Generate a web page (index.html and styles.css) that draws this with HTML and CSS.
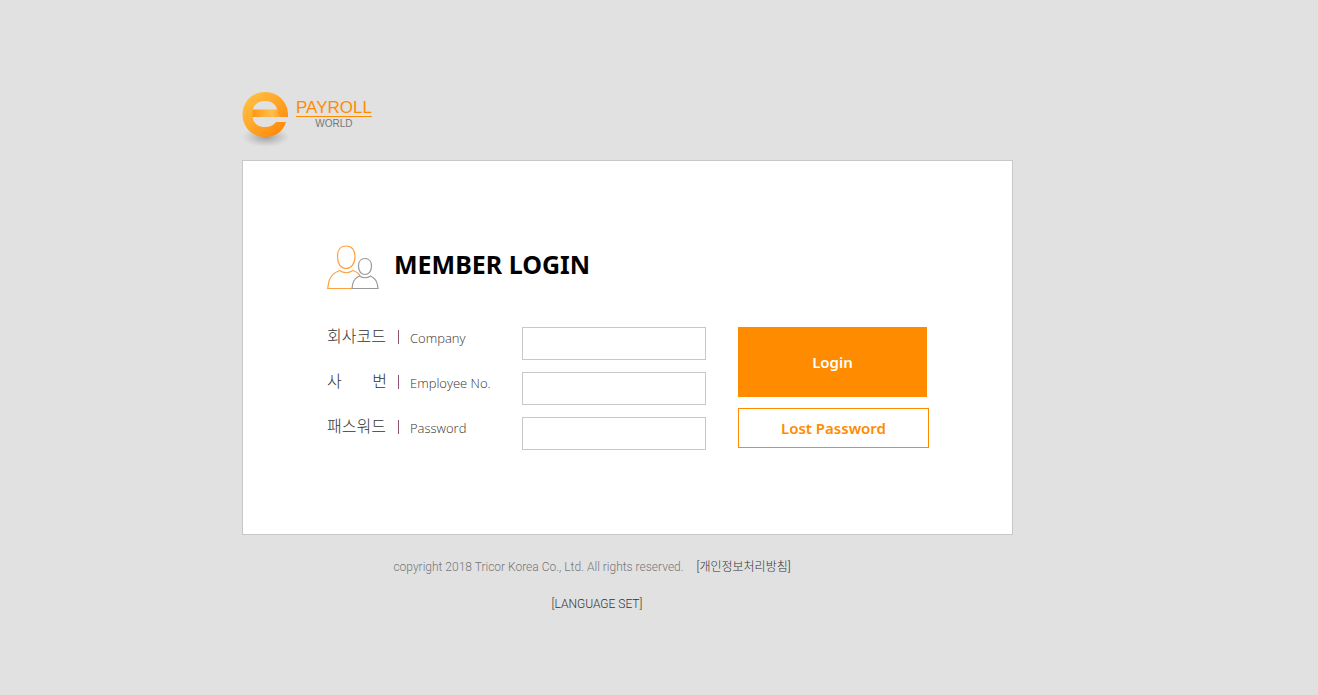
FILE: index.html
```html
<!DOCTYPE html>
<html lang="ko">

<head>
    <meta charset="UTF-8">
    <meta name="viewport" content="width=device-width, initial-scale=1.0">
    <title>e-Payroll World</title>
    <link rel="stylesheet" href="styles.css">
</head>

<body>

<div class="wrap">

    <header class="logo">
        <svg class="logo_mark" width="50" height="56" viewBox="0 0 50 56" aria-hidden="true">
            <defs>
                <linearGradient id="orange" x1="0" y1="0" x2="1" y2="1">
                    <stop offset="0" stop-color="#ffc64a"/>
                    <stop offset="0.45" stop-color="#ffa92c"/>
                    <stop offset="1" stop-color="#ff8000"/>
                </linearGradient>
                <linearGradient id="bar" x1="0" y1="0" x2="1" y2="0">
                    <stop offset="0" stop-color="#ff9612"/>
                    <stop offset="0.7" stop-color="#ffc04a"/>
                    <stop offset="1" stop-color="#ffa028"/>
                </linearGradient>
                <radialGradient id="shadow">
                    <stop offset="0" stop-color="#777" stop-opacity="0.65"/>
                    <stop offset="1" stop-color="#999" stop-opacity="0"/>
                </radialGradient>
            </defs>
            <ellipse cx="24" cy="46" rx="24" ry="10" fill="url(#shadow)"/>
            <path fill="url(#orange)" fill-rule="evenodd" d="M23 1C10 1 0.500 11 0.500 23.500S10 46 23 46C33 46 41 41 44 31H34C31.500 34.500 28 36 23 36C17 36 11.500 33 10.500 26H46V23.500C46 11 36 1 23 1ZM10.500 19C12 13 17 10 23 10S34 13 35.500 19Z"/>
            <path fill="url(#bar)" d="M10.500 18.500H35.500L38 26H10.500Z"/>
        </svg>
        <div class="logo_text">
            <span class="logo_payroll">PAYROLL</span>
            <span class="logo_world">WORLD</span>
        </div>
    </header>

    <main class="panel">
        <div class="title">
            <svg width="52" height="46" viewBox="0 0 52 46" fill="none" stroke-width="1.2" aria-hidden="true">
                <path stroke="#ffa040" d="M19 1C13.500 1 10.500 5 10.500 11.500C10.500 19 14 23.500 19 23.500S28 19 28 11.500C28 5 25 1 19 1ZM12.500 25.500C6 28 3.500 31 2 36L0.700 43.500H25M12.500 25.500Q19 30 26 25.500C30 27 32 28.500 33 31"/>
                <path stroke="#999" d="M38 13.500C34 13.500 31.500 16.500 31.500 21C31.500 26.500 34.500 29.500 38 29.500S44.500 26.500 44.500 21C44.500 16.500 42 13.500 38 13.500ZM32.500 31C28 33 26.500 35 25.700 39L25 43.500H51L50.300 39C49.500 35 47.500 33 43.500 31Q38 34.500 32.500 31Z"/>
            </svg>
            <h1>MEMBER LOGIN</h1>
        </div>

        <form class="login">
            <div class="fields">
                <label for="company"><span class="ko">회사코드</span><i></i>Company</label>
                <input type="text" id="company" name="company">
                <label for="empno"><span class="ko"><span>사</span><span>번</span></span><i></i>Employee No.</label>
                <input type="text" id="empno" name="empno">
                <label for="password"><span class="ko">패스워드</span><i></i>Password</label>
                <input type="password" id="password" name="password">
            </div>
            <div class="buttons">
                <button type="submit" class="btn_login">Login</button>
                <button type="button" class="btn_lost">Lost Password</button>
            </div>
        </form>
    </main>

    <footer>
        <p>copyright 2018 Tricor Korea Co., Ltd. All rights reserved. <a class="policy" href="#">[개인정보처리방침]</a></p>
        <p class="language"><a href="#">[LANGUAGE SET]</a></p>
    </footer>

</div>

</body>
</html>
```
FILE: styles.css
```css
* {
    box-sizing: border-box;
}

body {
    margin: 0;
    background-color: #e1e1e1;
    color: #333;
    font-family: "Open Sans", "Noto Sans CJK KR", sans-serif;
    font-size: 13px;
}

.wrap {
    max-width: 834px;
    margin: 0 auto;
    padding-top: 91px;
}

/* logo */
.logo {
    display: flex;
    gap: 4px;
    margin-bottom: 13px;
}

.logo_text {
    display: flex;
    flex-direction: column;
    align-self: flex-start;
    padding-top: 9px;
    font-family: "Liberation Sans", Arial, sans-serif;
    text-align: center;
}

.logo_payroll {
    border-bottom: 1px solid #ff8c00;
    color: #ff8c00;
    font-size: 17px;
    line-height: 16px;
}

.logo_world {
    color: #777;
    font-size: 10px;
    line-height: 14px;
}

/* login box */
.panel {
    max-width: 771px;
    padding: 84px;
    border: 1px solid #c8c8c8;
    background-color: #fff;
}

.title {
    display: flex;
    gap: 15px;
    margin-bottom: 36px;
}

.title h1 {
    margin: 0;
    color: #000;
    font-family: "Noto Sans", sans-serif;
    font-size: 25px;
    font-weight: 700;
    line-height: 38px;
}

.login {
    display: flex;
    gap: 32px;
}

.fields {
    display: grid;
    grid-template-columns: 195px 184px;
    gap: 12px 0;
}

.fields label {
    display: flex;
    font-weight: 300;
    line-height: 22px;
}

.ko {
    display: flex;
    justify-content: space-between;
    width: 60px;
    font-size: 16px;
    line-height: 18px;
}

.fields i {
    width: 1px;
    height: 14px;
    margin: 3px 11px 0 11px;
    background-color: #8f5570;
}

.fields input {
    width: 100%;
    height: 33px;
    padding: 0 8px;
    border: 1px solid #c8c8c8;
    background-color: #fff;
}

.buttons {
    display: flex;
    flex-direction: column;
    align-items: flex-start;
    gap: 11px;
}

.buttons button {
    font-family: "Noto Sans", sans-serif;
    font-size: 15px;
    font-weight: 600;
    cursor: pointer;
}

.btn_login {
    width: 189px;
    height: 70px;
    border: 0;
    background-color: #ff8c00;
    color: #fff;
}

.btn_lost {
    width: 191px;
    height: 40px;
    border: 1px solid #ff8c00;
    background-color: #fff;
    color: #ff8c00;
}

/* footer */
footer {
    max-width: 700px;
    padding-top: 23px;
    color: #777;
    font-family: Roboto, "Noto Sans CJK KR", sans-serif;
    font-size: 12px;
    font-weight: 300;
    line-height: 19px;
    text-align: center;
}

footer p {
    margin: 0 0 18px;
}

footer a {
    color: #333;
    text-decoration: none;
}

.policy {
    margin-left: 10px;
}

.language {
    padding-left: 10px;
}
```
